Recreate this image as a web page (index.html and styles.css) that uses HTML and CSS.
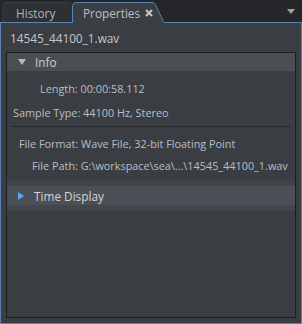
FILE: index.html
```html
<!DOCTYPE html>
<html>
<head>
<meta charset="utf-8">
<link rel="stylesheet" href="styles.css">
</head>
<body>
<div class="window">
  <div class="tabbar">
    <div class="tab tab-inactive">History</div>
    <div class="tab tab-active">
      <svg class="tab-shape" width="94" height="21" viewBox="0 0 94 21">
        <path d="M0.5,21 L0.5,4 Q0.5,0.5 4,0.5 L80,0.5 Q82.5,0.5 83.5,2.5 L92,21 Z" fill="#3b3f43" stroke="#5b83b1" stroke-width="1"/>
        <rect x="1" y="20" width="91" height="1" fill="#3b3f43"/>
      </svg>
      <span class="tab-label">Properties</span>
      <svg class="tab-close" width="8" height="8" viewBox="0 0 8 8">
        <path d="M1,1 L7,7 M7,1 L1,7" stroke="#c4c6c9" stroke-width="2"/>
      </svg>
    </div>
    <div class="tabbar-spacer"></div>
    <svg class="menu-arrow" width="8" height="5" viewBox="0 0 8 5">
      <path d="M0,0 L8,0 L4,5 Z" fill="#9ea2a7"/>
    </svg>
  </div>
  <div class="panel">
    <div class="filename">14545_44100_1.wav</div>
    <div class="box">
      <div class="group-header">
        <svg class="tri" width="8" height="6" viewBox="0 0 8 6"><path d="M0,0 L8,0 L4,6 Z" fill="#aebccb"/></svg>
        <span>Info</span>
      </div>
      <div class="group-body">
        <div class="row row-a"><span class="lbl-length">Length: 00:00:58.112</span></div>
        <div class="row row-a"><span class="lbl-sample">Sample Type: 44100 Hz, Stereo</span></div>
        <div class="sep"></div>
        <div class="rows-b">
          <div class="row row-b"><span class="lbl-format">File Format: Wave File, 32-bit Floating Point</span></div>
          <div class="row row-b"><span class="lbl-path">File Path: G:\workspace\sea\...\14545_44100_1.wav</span></div>
        </div>
      </div>
      <div class="band"></div>
      <div class="group-header group-header-time">
        <svg class="tri-right" width="6" height="8" viewBox="0 0 6 8"><path d="M0,0 L6,4 L0,8 Z" fill="#52a8f2"/></svg>
        <span>Time Display</span>
      </div>
      <div class="strip"></div>
      <div class="fill"></div>
    </div>
  </div>
</div>
</body>
</html>
```
FILE: styles.css
```css
* { box-sizing: border-box; }
html, body { margin: 0; padding: 0; }
body {
  background: #252729;
  font-family: "Open Sans", "Noto Sans", sans-serif;
  font-size: 10.85px;
  color: #b8bfc7;
}
.window {
  width: 302px;
  height: 324px;
  display: flex;
  flex-direction: column;
}
.tabbar {
  height: 23px;
  display: flex;
  align-items: flex-end;
  border-bottom: 1px solid #5b83b1;
  padding-left: 2px;
  background: #242629;
}
.tab {
  height: 20px;
  display: flex;
  align-items: center;
}
.tab-inactive {
  width: 70px;
  background: #2d3034;
  border-top: 1px solid #3b3e42;
  border-left: 1px solid #34373b;
  border-radius: 4px 4px 0 0;
  padding-left: 13px;
  color: #b0b5bb;
  font-size: 11.8px;
}
.tab-active {
  position: relative;
  width: 94px;
  height: 21px;
  margin-bottom: -1px;
  padding-left: 11px;
  color: #b9c0c8;
  font-size: 11.8px;
}
.tab-shape {
  position: absolute;
  left: 0;
  top: 0;
}
.tab-label, .tab-close { position: relative; }
.tab-close { margin-left: 5px; }
.tabbar-spacer { flex: 1; }
.menu-arrow { margin: 0 7px 8px 0; }
.panel {
  flex: 1;
  display: flex;
  flex-direction: column;
  background: #3a3e42;
  border: 1px solid #5b83b1;
  border-top: none;
}
.filename {
  height: 29px;
  display: flex;
  align-items: center;
  padding-left: 9px;
  color: #c3c8cd;
  font-size: 11.8px;
}
.box {
  flex: 1;
  margin: 0 5px 5px 5px;
  border: 1px solid #1c1e20;
  display: flex;
  flex-direction: column;
}
.group-header {
  height: 18px;
  background: #4a4f54;
  display: flex;
  align-items: center;
  padding-left: 11px;
  color: #c6cfd9;
  font-size: 11.8px;
}
.group-header .tri { margin-right: 9px; }
.group-header-time {
  height: 19px;
  background: #4b5056;
  color: #d0d5da;
}
.group-header-time .tri-right { margin-right: 10px; }
.group-body {
  padding-top: 5px;
}
.row {
  display: flex;
  align-items: center;
}
.row-a { height: 24px; }
.row-b { height: 22px; }
.lbl-length { padding-left: 33px; }
.lbl-sample { padding-left: 6px; }
.lbl-format { padding-left: 12px; }
.lbl-path { padding-left: 25px; }
.sep {
  height: 1px;
  margin: 2px 4px 0 5px;
  background: #26292c;
}
.rows-b {
  padding-top: 5px;
  padding-bottom: 4px;
}
.band {
  height: 6px;
  background: #404448;
}
.strip {
  height: 6px;
  background: #43474b;
}
.fill { flex: 1; }
```
